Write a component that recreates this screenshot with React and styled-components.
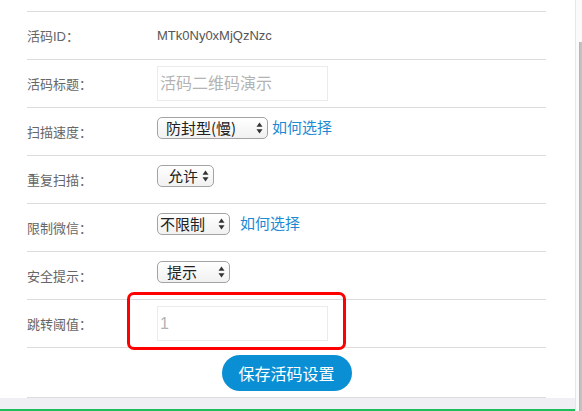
import React from "react";
import styled, { createGlobalStyle } from "styled-components";

const Global = createGlobalStyle`
  html, body { margin: 0; padding: 0; background: #ffffff; }
  body { font-family: "Liberation Sans", "Noto Sans CJK SC", sans-serif; }
  * { box-sizing: border-box; }
`;

const Screen = styled.div`
  display: flex;
  width: 582px;
  height: 411px;
  overflow: hidden;
  background: #ffffff;
`;

const Main = styled.div`
  width: 575px;
  display: flex;
  flex-direction: column;
  background: #efeff4;
`;

const Panel = styled.div`
  background: #ffffff;
  padding: 0 29px 0 27px;
`;

const Form = styled.div`
  display: flex;
  flex-direction: column;
`;

const Row = styled.div`
  position: relative;
  display: grid;
  grid-template-columns: 130px 1fr;
  align-items: center;
  height: 48px;
  border-bottom: 1px solid #dcdcdc;
`;

const NoticeRow = styled.div`
  margin-top: -18px;
  height: 30px;
  border-bottom: 1px solid #dcdcdc;
  padding-left: 3px;
  color: #ff4d4d;
  font-size: 13px;
  line-height: 20px;
  white-space: nowrap;
  overflow: hidden;
  font-family: "Noto Sans CJK SC", sans-serif;
`;

const Label = styled.div`
  font-size: 13px;
  color: #666666;
  font-family: "Liberation Sans", "Noto Sans CJK SC", sans-serif;
`;

const Value = styled.div`
  display: flex;
  align-items: center;
  margin-bottom: ${(p) => (p.$raised ? "8px" : "0")};
`;

const IdText = styled.span`
  font-size: 13px;
  color: #555555;
  font-family: "Liberation Sans", sans-serif;
`;

const TextInput = styled.input`
  width: 171px;
  height: 35px;
  border: 1px solid #ebebeb;
  padding: 0 2px;
  font-size: 16px;
  color: #999999;
  font-family: "Liberation Sans", "Noto Sans CJK SC", sans-serif;
  background: #ffffff;
  outline: none;
  &::placeholder { color: #b3b3b3; }
`;

const SelectWrap = styled.div`
  position: relative;
  display: inline-flex;
  width: ${(p) => p.$w}px;
  height: 22px;
`;

const Select = styled.select`
  appearance: none;
  -webkit-appearance: none;
  width: 100%;
  height: 22px;
  border: 1px solid #a3a3a3;
  border-radius: 5px;
  background: linear-gradient(#ffffff, #f1f1f1);
  padding: 0 0 0 ${(p) => p.$pad}px;
  font-size: 15px;
  line-height: 20px;
  color: #222222;
  font-family: "Noto Sans CJK SC", sans-serif;
  outline: none;
`;

const Arrows = styled.svg`
  position: absolute;
  right: 5px;
  top: 5px;
  pointer-events: none;
`;

const HelpLink = styled.a`
  margin-left: ${(p) => p.$gap}px;
  font-size: 15px;
  color: #1b8ad3;
  text-decoration: none;
  font-family: "Noto Sans CJK SC", sans-serif;
  margin-top: -2px;
`;

const Highlight = styled.div`
  position: absolute;
  left: 100px;
  top: -8px;
  width: 219px;
  height: 58px;
  border: 3px solid #ff0000;
  border-radius: 7px;
  pointer-events: none;
`;

const ButtonRow = styled.div`
  display: flex;
  justify-content: center;
  align-items: center;
  height: 50px;
  border-bottom: 1px solid #dcdcdc;
  padding-top: 1px;
`;

const SaveButton = styled.button`
  width: 130px;
  height: 36px;
  border: none;
  border-radius: 18px;
  background: #0b8fd4;
  color: #ffffff;
  font-size: 16px;
  font-family: "Noto Sans CJK SC", sans-serif;
  padding: 0;
`;

const Footer = styled.div`
  flex: 1;
  display: flex;
  flex-direction: column;
  justify-content: flex-end;
`;

const GreenBar = styled.div`
  height: 2px;
  background: #1cbf5b;
`;

const Scroll = styled.div`
  flex: 1;
  display: flex;
  border-left: 1px solid #e6e6e6;
  background: #fafafa;
  padding: 42px 0 0 3px;
`;

const Thumb = styled.div`
  flex: 1;
  background: #c2c2c2;
  border-left: 1px solid #b5b5b5;
`;

const ArrowIcon = () => (
  <Arrows width="7" height="12" viewBox="0 0 7 12">
    <path d="M3.5 0.5 L6.5 4.8 L0.5 4.8 Z" fill="#333" />
    <path d="M3.5 11.5 L6.5 7.2 L0.5 7.2 Z" fill="#333" />
  </Arrows>
);

const Dropdown = ({ width, pad = 8, options }) => (
  <SelectWrap $w={width}>
    <Select $pad={pad} defaultValue={options[0]}>
      {options.map((o) => (
        <option key={o}>{o}</option>
      ))}
    </Select>
    <ArrowIcon />
  </SelectWrap>
);

export default function App() {
  return (
    <>
      <Global />
      <Screen>
        <Main>
          <Panel>
            <Form>
              <NoticeRow>注意：活码设置修改后，立即生效，请谨慎操作</NoticeRow>
              <Row>
                <Label>活码ID：</Label>
                <Value>
                  <IdText>MTk0Ny0xMjQzNzc</IdText>
                </Value>
              </Row>
              <Row>
                <Label>活码标题：</Label>
                <Value>
                  <TextInput placeholder="活码二维码演示" />
                </Value>
              </Row>
              <Row>
                <Label>扫描速度：</Label>
                <Value $raised>
                  <Dropdown width={111} pad={8} options={["防封型(慢)", "标准型(快)"]} />
                  <HelpLink $gap={4} href="#">如何选择</HelpLink>
                </Value>
              </Row>
              <Row>
                <Label>重复扫描：</Label>
                <Value $raised>
                  <Dropdown width={57} pad={10} options={["允许", "禁止"]} />
                </Value>
              </Row>
              <Row>
                <Label>限制微信：</Label>
                <Value $raised>
                  <Dropdown width={73} pad={2} options={["不限制", "仅微信"]} />
                  <HelpLink $gap={10} href="#">如何选择</HelpLink>
                </Value>
              </Row>
              <Row>
                <Label>安全提示：</Label>
                <Value $raised>
                  <Dropdown width={73} pad={9} options={["提示", "不提示"]} />
                </Value>
              </Row>
              <Row>
                <Label>跳转阈值：</Label>
                <Value>
                  <TextInput placeholder="1" />
                </Value>
                <Highlight />
              </Row>
              <ButtonRow>
                <SaveButton>保存活码设置</SaveButton>
              </ButtonRow>
            </Form>
          </Panel>
          <Footer>
            <GreenBar />
          </Footer>
        </Main>
        <Scroll>
          <Thumb />
        </Scroll>
      </Screen>
    </>
  );
}
